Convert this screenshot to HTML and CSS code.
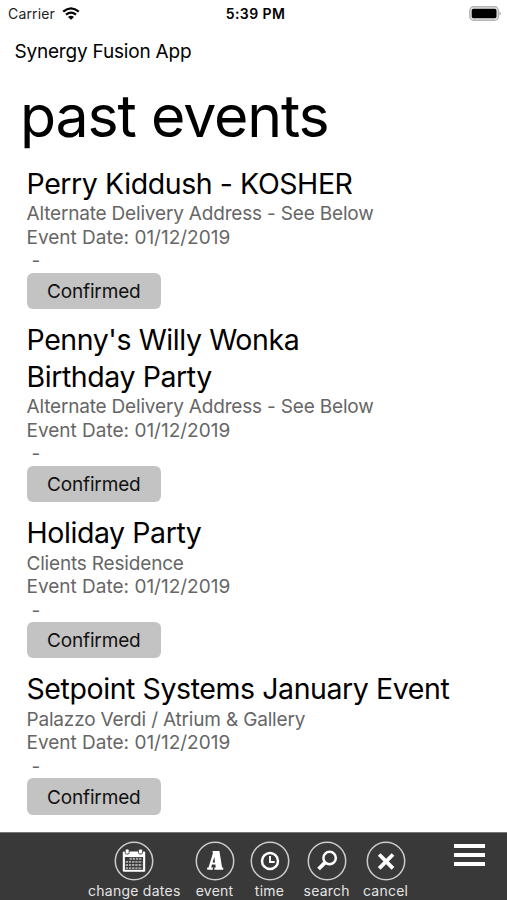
FILE: index.html
```html
<!DOCTYPE html>
<html lang="en">
<head>
	<meta charset="UTF-8" />
	<meta name="viewport" content="width=device-width, initial-scale=1.0" />
	<title>Synergy Fusion App</title>
	<link rel="stylesheet" href="styles.css">
</head>
<body>
	<!-- Status Bar -->
	<header class="status-bar">
		<div class="carrier">
			<span>Carrier</span>
			<svg class="wifi" viewBox="0 0 18 13" width="18" height="13">
				<path d="M1.2 4.7 Q9 -2 16.8 4.7" fill="none" stroke="#000" stroke-width="2.3" />
				<path d="M4 7.7 Q9 3.4 14 7.7" fill="none" stroke="#000" stroke-width="2.2" />
				<path d="M6 9.9 Q9 7.4 12 9.9 L9 12.8 Z" fill="#000" />
			</svg>
		</div>
		<div class="clock">5:39 PM</div>
		<svg class="battery" viewBox="0 0 33 15" width="33" height="15">
			<rect x="0.8" y="0.8" width="28.6" height="13.4" rx="3.8" fill="#e8e8e8" stroke="#b4b4b4" stroke-width="1.4" />
			<rect x="2.7" y="2.8" width="24.8" height="9.4" rx="1.6" fill="#000" />
			<path d="M30.6 5.4 Q32.6 7.5 30.6 9.6 Z" fill="#888" />
		</svg>
	</header>
	<!-- End of Status Bar -->

	<main class="app">
		<h3 class="app-name">Synergy Fusion App</h3>
		<h1 class="title">past events</h1>

		<!-- Event List -->
		<section class="event-list">
			<div class="event">
				<h2>Perry Kiddush - KOSHER</h2>
				<p>Alternate Delivery Address - See Below</p>
				<p class="date">Event Date: 01/12/2019</p>
				<p class="hours">-</p>
				<button>Confirmed</button>
			</div>
			<div class="event">
				<h2>Penny's Willy Wonka<br>Birthday Party</h2>
				<p>Alternate Delivery Address - See Below</p>
				<p class="date">Event Date: 01/12/2019</p>
				<p class="hours">-</p>
				<button>Confirmed</button>
			</div>
			<div class="event">
				<h2>Holiday Party</h2>
				<p>Clients Residence</p>
				<p class="date">Event Date: 01/12/2019</p>
				<p class="hours">-</p>
				<button>Confirmed</button>
			</div>
			<div class="event">
				<h2>Setpoint Systems January Event</h2>
				<p>Palazzo Verdi / Atrium &amp; Gallery</p>
				<p class="date">Event Date: 01/12/2019</p>
				<p class="hours">-</p>
				<button>Confirmed</button>
			</div>
		</section>
		<!-- End of Event List -->
	</main>

	<!-- App Bar -->
	<footer class="app-bar">
		<nav class="commands">
			<a class="command">
				<svg viewBox="0 0 40 40" width="40" height="40">
					<circle cx="20" cy="20" r="18.7" />
					<rect x="8.8" y="10.5" width="22.4" height="20.3" rx="1" fill="#fff" />
					<rect x="11.2" y="8" width="4" height="5" rx="1.4" fill="#fff" stroke="#393939" stroke-width="0.9" />
					<rect x="24.5" y="8" width="4" height="5" rx="1.4" fill="#fff" stroke="#393939" stroke-width="0.9" />
					<rect x="10.9" y="16" width="18.2" height="12.8" fill="#393939" />
					<path d="M15.5 17.8H28.3M11.7 20.9H28.3M11.7 24H28.3M11.7 27.1H28.3" stroke="#aaa" stroke-width="1.9" stroke-dasharray="2.3 0.9" />
				</svg>
				<span>change dates</span>
			</a>
			<a class="command">
				<svg viewBox="0 0 40 40" width="40" height="40">
					<circle cx="20" cy="20" r="18.7" />
					<path d="M17.6 10H24.4L27.1 26.4H28.2V28.8H19.4V26.4H20.8L20.4 23.6H16.9L16.2 26.4H17.8V28.8H12.2V26.4H13.5L18 12H17.6ZM19.3 16L17.5 21.6H20.1Z" fill="#fff" fill-rule="evenodd" />
				</svg>
				<span>event</span>
			</a>
			<a class="command">
				<svg viewBox="0 0 40 40" width="40" height="40">
					<circle cx="20" cy="20" r="18.7" />
					<circle class="thick" cx="20" cy="20" r="8" />
					<path class="line" d="M20 15V21H24.7" />
				</svg>
				<span>time</span>
			</a>
			<a class="command">
				<svg viewBox="0 0 40 40" width="40" height="40">
					<circle cx="20" cy="20" r="18.7" />
					<circle class="thick" cx="22.6" cy="17" r="6.2" />
					<path d="M18.2 21.4L11.6 28" fill="none" stroke="#fff" stroke-width="3.8" />
				</svg>
				<span>search</span>
			</a>
			<a class="command">
				<svg viewBox="0 0 40 40" width="40" height="40">
					<circle cx="20" cy="20" r="18.7" />
					<path d="M13.2 13.5L27 27.3M27 13.5L13.2 27.3" fill="none" stroke="#fff" stroke-width="3.8" />
				</svg>
				<span>cancel</span>
			</a>
		</nav>
		<div class="menu">
			<span></span>
			<span></span>
			<span></span>
		</div>
	</footer>
	<!-- End of App Bar -->
</body>
</html>
```
FILE: styles.css
```css
* {
	margin: 0;
	padding: 0;
	box-sizing: border-box;
	font-family: Inter, "Liberation Sans", sans-serif;
}

body {
	display: flex;
	flex-direction: column;
	height: 900px;
	overflow: hidden;
	background: #fff;
	color: #000;
}

/* Status Bar */
.status-bar {
	display: grid;
	grid-template-columns: 1fr auto 1fr;
	align-items: center;
	height: 27px;
	padding: 0 5px 0 8px;
	font-size: 14px;
	line-height: 27px;
}

.carrier {
	display: flex;
	align-items: center;
	gap: 7px;
	color: #222;
	letter-spacing: 0.15px;
}

.clock {
	padding-left: 1px;
	font-weight: 600;
	letter-spacing: 0.4px;
}

.battery {
	justify-self: end;
}
/* End of Status Bar */

.app {
	flex: 1;
	min-height: 0;
}

.app-name {
	padding-top: 1px;
	margin-left: 14.5px;
	font-size: 19px;
	font-weight: 400;
	line-height: 47px;
	letter-spacing: -0.2px;
}

.title {
	padding-top: 1px;
	margin-left: 20px;
	font-size: 59px;
	font-weight: 400;
	line-height: 79px;
	letter-spacing: -1.15px;
	white-space: nowrap;
}

/* Event List */
.event-list {
	padding: 10.8px 0 0 26.5px;
}

.event {
	margin-bottom: 13px;
	white-space: nowrap;
}

.event h2 {
	font-size: 28.5px;
	font-weight: 400;
	line-height: 36.5px;
	letter-spacing: -0.42px;
}

.event p {
	color: #666;
	font-size: 19px;
	line-height: 23.5px;
	letter-spacing: -0.18px;
}

.event .date {
	letter-spacing: 0;
}

.event .hours {
	padding-left: 5px;
}

.event button {
	display: block;
	width: 134.5px;
	height: 36.4px;
	padding-top: 1px;
	border: none;
	border-radius: 6px;
	background: #c3c3c3;
	color: #111;
	font-size: 19px;
	letter-spacing: -0.15px;
}
/* End of Event List */

/* App Bar */
.app-bar {
	display: flex;
	justify-content: space-between;
	height: 68px;
	padding: 8px 22px 0 88px;
	border-top: 1px solid #777;
	background: #393939;
}

.commands {
	display: flex;
	gap: 13px;
}

.command {
	display: flex;
	flex-direction: column;
	align-items: center;
	min-width: 42px;
	color: #e4e4e4;
	font-size: 14px;
	line-height: 20px;
	letter-spacing: 0.25px;
}

.command svg {
	flex-shrink: 0;
}

.command circle {
	fill: none;
	stroke: #ccc;
	stroke-width: 1.5;
}

.command circle.thick {
	stroke: #fff;
	stroke-width: 2.5;
}

.command .line {
	fill: none;
	stroke: #fff;
	stroke-width: 2;
}

.menu {
	display: flex;
	flex-direction: column;
	gap: 5px;
	padding-top: 3px;
}

.menu span {
	width: 31px;
	height: 4px;
	background: #fff;
}
/* End of App Bar */
```
